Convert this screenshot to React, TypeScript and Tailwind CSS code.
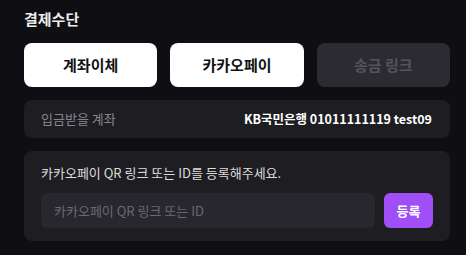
import { useState } from "react";

const methods = ["계좌이체", "카카오페이", "송금 링크"];

export default function App() {
  const [value, setValue] = useState("");

  return (
    <div
      className="w-[466px] h-[255px] bg-[#0f0e13] pl-6 pr-4 pt-[9px] text-white"
      style={{ fontFamily: '"Noto Sans CJK KR", "Noto Sans", sans-serif' }}
    >
      <h2 className="text-[15px] leading-[20px] font-bold text-[#ececec]">결제수단</h2>

      <div className="mt-[14px] grid grid-cols-3 gap-[13px]">
        {methods.map((m, i) =>
          i < 2 ? (
            <button
              key={m}
              className="h-[44px] rounded-lg bg-white text-[15px] font-bold text-[#111]"
            >
              {m}
            </button>
          ) : (
            <button
              key={m}
              disabled
              className="h-[44px] rounded-lg bg-[#2c2b31] text-[15px] font-bold text-[#55545a]"
            >
              {m}
            </button>
          )
        )}
      </div>

      <div className="mt-[13px] flex h-[38px] items-center justify-between rounded-lg bg-[#1e1d22] pl-[17px] pr-[18px]">
        <span className="text-[13px] text-[#86858b]">입금받을 계좌</span>
        <span className="text-[12.5px] font-semibold text-white">KB국민은행 01011111119 test09</span>
      </div>

      <div className="mt-[13px] rounded-lg bg-[#1e1d22] pl-[17px] pr-[17px] pt-[12px] pb-[13px]">
        <p className="text-[13px] leading-[20px] text-[#dcdcdc]">
          카카오페이 QR 링크 또는 ID를 등록해주세요.
        </p>
        <div className="mt-[10px] flex gap-[9px]">
          <input
            className="h-[35px] flex-1 rounded-md bg-[#28272d] px-[13px] text-[13px] text-white placeholder-[#6a696f] outline-none"
            placeholder="카카오페이 QR 링크 또는 ID"
            value={value}
            onChange={(e) => setValue(e.target.value)}
          />
          <button className="h-[35px] w-[49px] rounded-md bg-[#a04ef6] text-[13px] font-bold text-white">
            등록
          </button>
        </div>
      </div>
    </div>
  );
}
